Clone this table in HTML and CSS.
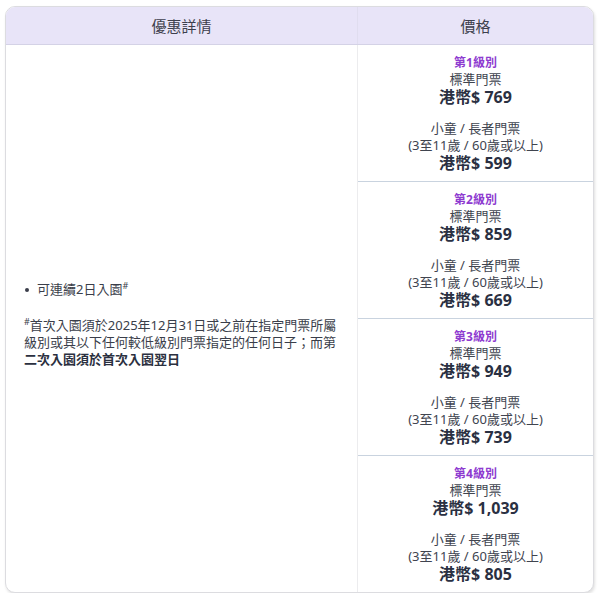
FILE: index.html
```html
<!DOCTYPE html>
<html lang="zh-Hant">
<head>
<meta charset="utf-8">
<link rel="stylesheet" href="styles.css">
</head>
<body>
<div class="table">
  <div class="head">
    <div class="th th-left">優惠詳情</div>
    <div class="th th-right">價格</div>
  </div>
  <div class="body">
    <div class="details">
      <div class="inner">
        <ul class="list">
          <li>可連續2日入園<sup>#</sup></li>
        </ul>
        <p class="note"><sup>#</sup>首次入園須於2025年12月31日或之前在指定門票所屬級別或其以下任何較低級別門票指定的任何日子；而第<b>二次入園須於首次入園翌日</b></p>
      </div>
    </div>
    <div class="prices">
      <div class="tier">
        <div class="label">第1級別</div>
        <div class="line">標準門票</div>
        <div class="price">港幣$ 769</div>
        <div class="line gap">小童 / 長者門票</div>
        <div class="line">(3至11歲 / 60歲或以上)</div>
        <div class="price">港幣$ 599</div>
      </div>
      <div class="tier">
        <div class="label">第2級別</div>
        <div class="line">標準門票</div>
        <div class="price">港幣$ 859</div>
        <div class="line gap">小童 / 長者門票</div>
        <div class="line">(3至11歲 / 60歲或以上)</div>
        <div class="price">港幣$ 669</div>
      </div>
      <div class="tier">
        <div class="label">第3級別</div>
        <div class="line">標準門票</div>
        <div class="price">港幣$ 949</div>
        <div class="line gap">小童 / 長者門票</div>
        <div class="line">(3至11歲 / 60歲或以上)</div>
        <div class="price">港幣$ 739</div>
      </div>
      <div class="tier">
        <div class="label">第4級別</div>
        <div class="line">標準門票</div>
        <div class="price">港幣$ 1,039</div>
        <div class="line gap">小童 / 長者門票</div>
        <div class="line">(3至11歲 / 60歲或以上)</div>
        <div class="price">港幣$ 805</div>
      </div>
    </div>
  </div>
</div>
</body>
</html>
```
FILE: styles.css
```css
html, body {
  margin: 0;
  padding: 0;
  background: #ffffff;
}
body {
  padding: 6px 6px 0 5px;
  font-family: "Noto Sans", "Noto Sans CJK TC", sans-serif;
  color: #3a3e4a;
}
.table {
  width: 587px;
  border: 1px solid #dcdce0;
  border-radius: 10px;
  overflow: hidden;
  box-shadow: 1px 2px 3px rgba(0, 0, 0, 0.12);
  background: #fff;
}
.head {
  display: grid;
  grid-template-columns: 352px 1fr;
  background: #e8e4f8;
  border-bottom: 1px solid #d4d2e6;
}
.th {
  height: 37px;
  display: flex;
  align-items: center;
  justify-content: center;
  font-size: 15px;
  color: #3d3f4d;
}
.th-left {
  border-right: 1px solid #e0ddef;
}
.body {
  display: grid;
  grid-template-columns: 352px 1fr;
}
.details {
  border-right: 1px solid #ececee;
  display: flex;
  align-items: center;
  padding: 12px 18px 0;
}
.inner {
  font-size: 13px;
  line-height: 17px;
  color: #3a3e4a;
}
.list {
  list-style: none;
  margin: 0 0 19px 0;
  padding: 0;
}
.list li {
  position: relative;
  padding-left: 13px;
}
.list li::before {
  content: "";
  position: absolute;
  left: 1px;
  top: 7px;
  width: 4px;
  height: 4px;
  border-radius: 50%;
  background: #3a3e4a;
}
sup {
  font-size: 9px;
  line-height: 0;
  vertical-align: 5px;
}
.note {
  margin: 0;
}
.note b {
  font-weight: 700;
  color: #2b3040;
}
.tier {
  padding: 9px 8px 8px;
  text-align: center;
  border-bottom: 1px solid #c9d3df;
}
.tier:last-child {
  border-bottom: none;
}
.label {
  font-size: 12px;
  line-height: 17px;
  font-weight: 700;
  color: #8e3bd0;
}
.line {
  font-size: 13px;
  line-height: 17px;
  color: #40444f;
}
.line.gap {
  margin-top: 13px;
}
.price {
  font-size: 16px;
  line-height: 19px;
  font-weight: 700;
  color: #2a3042;
}
```
